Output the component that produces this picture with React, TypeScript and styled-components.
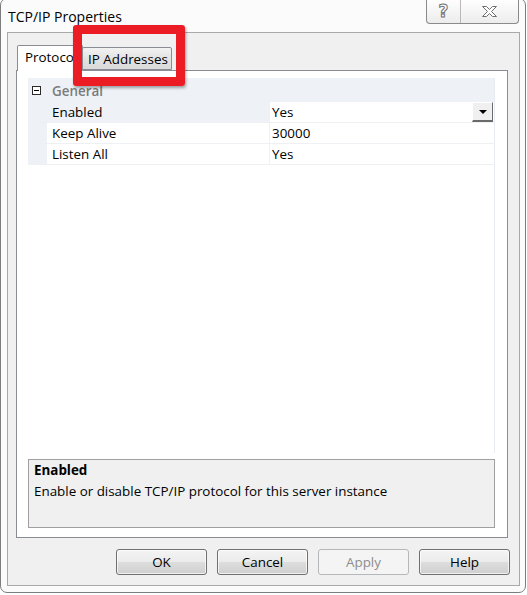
import React from 'react';
import styled, { createGlobalStyle } from 'styled-components';

const GlobalStyle = createGlobalStyle`
  html, body {
    margin: 0;
    padding: 0;
    background: #ffffff;
  }
  body {
    font-family: "Open Sans", "Noto Sans", "Liberation Sans", sans-serif;
    font-size: 13.4px;
    color: #000;
  }
`;

// window frame
const Frame = styled.div`
  position: relative;
  box-sizing: border-box;
  width: 526px;
  height: 595px;
  margin-top: -2px;
  border: 1px solid #7d7d7d;
  border-radius: 7px;
  background: #fbfbfb;
  padding: 0 5px 6px 6px;
  display: flex;
  flex-direction: column;
`;

const TitleBar = styled.div`
  height: 33px;
  flex: none;
  display: flex;
  justify-content: space-between;
  align-items: flex-start;
`;

const Title = styled.div`
  margin: 9px 0 0 1px;
  font-size: 14px;
  line-height: 17px;
  color: #000;
`;

const CaptionButtons = styled.div`
  display: flex;
  height: 24px;
  margin-right: 1px;
  border: 1px solid #8a8a8a;
  border-top: none;
  border-radius: 0 0 4px 4px;
  background: linear-gradient(#ffffff, #ececec);
  overflow: hidden;
`;

const CaptionButton = styled.div<{ $w: number }>`
  width: ${p => p.$w}px;
  display: flex;
  align-items: center;
  justify-content: center;
  & + & {
    border-left: 1px solid #b9b9b9;
  }
`;

const HelpGlyph = styled.span`
  font-family: "DejaVu Sans", sans-serif;
  font-weight: bold;
  font-size: 17px;
  line-height: 20px;
  color: #ffffff;
  -webkit-text-stroke: 1px #6f6f6f;
  margin-top: -1px;
`;

// client area
const Client = styled.div`
  box-sizing: border-box;
  height: 554px;
  border: 1px solid #a9a9a9;
  background: #f0f0f0;
  padding: 12px 11px 10px 8px;
  display: flex;
  flex-direction: column;
`;

const TabStrip = styled.div`
  height: 25px;
  display: flex;
  align-items: flex-end;
  padding-left: 1px;
`;

const Tab = styled.div<{ $active?: boolean; $width: number }>`
  position: relative;
  box-sizing: border-box;
  width: ${p => p.$width}px;
  height: ${p => (p.$active ? 26 : 23)}px;
  margin-bottom: ${p => (p.$active ? -1 : 0)}px;
  margin-left: ${p => (p.$active ? 0 : -1)}px;
  z-index: ${p => (p.$active ? 1 : 2)};
  border: 1px solid #898c95;
  border-bottom: ${p => (p.$active ? 'none' : '1px solid #898c95')};
  border-radius: 2px 2px 0 0;
  background: ${p => (p.$active ? '#ffffff' : 'linear-gradient(#f2f2f2, #e3e3e3 50%, #d9d9d9)')};
  padding: ${p => (p.$active ? '3px 0 0 7px' : '3px 0 0 5px')};
  line-height: 17px;
  white-space: nowrap;
`;

const Panel = styled.div`
  box-sizing: border-box;
  height: 468px;
  border: 1px solid #898c95;
  background: #ffffff;
  padding: 7px 12px 9px 11px;
  display: flex;
  flex-direction: column;
`;

// property grid
const Grid = styled.div`
  height: 375px;
  background: #ffffff;
  border-right: 1px solid #e8ecf2;
`;

const CategoryRow = styled.div`
  height: 24px;
  display: flex;
  align-items: center;
  background: #eef2f7;
`;

const ExpandBox = styled.div`
  box-sizing: border-box;
  width: 9px;
  height: 9px;
  margin: 0 11px 0 4px;
  border: 1px solid #2a2a2a;
  background: #fff;
  display: flex;
  align-items: center;
  justify-content: center;
  &::after {
    content: '';
    width: 5px;
    height: 1px;
    background: #000;
  }
`;

const CategoryLabel = styled.span`
  font-weight: 600;
  color: #7b7b7b;
  line-height: 17px;
  margin-top: 2px;
`;

const Row = styled.div`
  height: 21px;
  display: flex;
  box-sizing: border-box;
  border-bottom: 1px solid #eef0f3;
`;

const Gutter = styled.div`
  width: 19px;
  background: #eef2f7;
`;

const NameCell = styled.div<{ $selected?: boolean }>`
  width: 223px;
  padding-left: 5px;
  box-sizing: border-box;
  border-right: 1px solid #eef0f3;
  background: ${p => (p.$selected ? '#eef2f7' : '#ffffff')};
  line-height: 21px;
`;

const ValueCell = styled.div`
  flex: 1;
  display: flex;
  justify-content: space-between;
  padding-left: 2px;
  line-height: 21px;
`;

const DropButton = styled.div`
  box-sizing: border-box;
  width: 21px;
  height: 20px;
  margin-right: 1px;
  background: #f0f0f0;
  border-top: 1px solid #ffffff;
  border-left: 1px solid #ffffff;
  border-right: 1px solid #6a6a6a;
  border-bottom: 2px solid #6a6a6a;
  display: flex;
  align-items: center;
  justify-content: center;
  &::after {
    content: '';
    border-left: 4px solid transparent;
    border-right: 4px solid transparent;
    border-top: 4px solid #000;
  }
`;

const Description = styled.div`
  box-sizing: border-box;
  height: 69px;
  margin-top: 6px;
  border: 1px solid #a0a0a0;
  background: #f0f0f0;
  padding: 0 5px;
  line-height: 21px;
`;

const DescTitle = styled.div`
  font-weight: bold;
`;

// buttons
const ButtonRow = styled.div`
  display: flex;
  justify-content: flex-end;
  gap: 10px;
  margin: 11px -2px 0 0;
`;

const Button = styled.div<{ $disabled?: boolean }>`
  box-sizing: border-box;
  width: 91px;
  height: 26px;
  border: 1px solid ${p => (p.$disabled ? '#b5b8bb' : '#707070')};
  border-radius: 3px;
  background: ${p =>
    p.$disabled
      ? '#f4f4f4'
      : 'linear-gradient(#f4f4f4, #ebebeb 50%, #dddddd 51%, #cfcfcf)'};
  box-shadow: ${p => (p.$disabled ? 'none' : 'inset 0 0 0 1px rgba(255,255,255,0.7)')};
  color: ${p => (p.$disabled ? '#8d8d8d' : '#000')};
  display: flex;
  align-items: center;
  justify-content: center;
`;

// annotation drawn over the screenshot
const Highlight = styled.div`
  position: absolute;
  left: 72px;
  top: 26px;
  width: 112px;
  height: 61px;
  box-sizing: border-box;
  border: 9px solid #ec1c24;
  border-radius: 3px;
  box-shadow: 1px 2px 3px rgba(0, 0, 0, 0.35);
  z-index: 5;
`;

const rows = [
  { name: 'Enabled', value: 'Yes', selected: true },
  { name: 'Keep Alive', value: '30000' },
  { name: 'Listen All', value: 'Yes' },
];

export default function App() {
  return (
    <>
      <GlobalStyle />
      <Frame>
        <TitleBar>
          <Title>TCP/IP Properties</Title>
          <CaptionButtons>
            <CaptionButton $w={33}>
              <HelpGlyph>?</HelpGlyph>
            </CaptionButton>
            <CaptionButton $w={57}>
              <svg width="17" height="13" viewBox="0 0 17 13">
                <polygon
                  points="1.5,1.5 5.5,1.5 8.5,4.5 11.5,1.5 15.5,1.5 10.5,6.5 15.5,11.5 11.5,11.5 8.5,8.5 5.5,11.5 1.5,11.5 6.5,6.5"
                  fill="#ffffff"
                  stroke="#6f6f6f"
                  strokeWidth="1"
                  strokeLinejoin="round"
                />
              </svg>
            </CaptionButton>
          </CaptionButtons>
        </TitleBar>
        <Client>
          <TabStrip>
            <Tab $active $width={66}>Protocol</Tab>
            <Tab $width={90}>IP Addresses</Tab>
          </TabStrip>
          <Panel>
            <Grid>
              <CategoryRow>
                <ExpandBox />
                <CategoryLabel>General</CategoryLabel>
              </CategoryRow>
              {rows.map(r => (
                <Row key={r.name}>
                  <Gutter />
                  <NameCell $selected={r.selected}>{r.name}</NameCell>
                  <ValueCell>
                    <span>{r.value}</span>
                    {r.selected && <DropButton />}
                  </ValueCell>
                </Row>
              ))}
            </Grid>
            <Description>
              <DescTitle>Enabled</DescTitle>
              <div>Enable or disable TCP/IP protocol for this server instance</div>
            </Description>
          </Panel>
          <ButtonRow>
            <Button>OK</Button>
            <Button>Cancel</Button>
            <Button $disabled>Apply</Button>
            <Button>Help</Button>
          </ButtonRow>
        </Client>
        <Highlight />
      </Frame>
    </>
  );
}
